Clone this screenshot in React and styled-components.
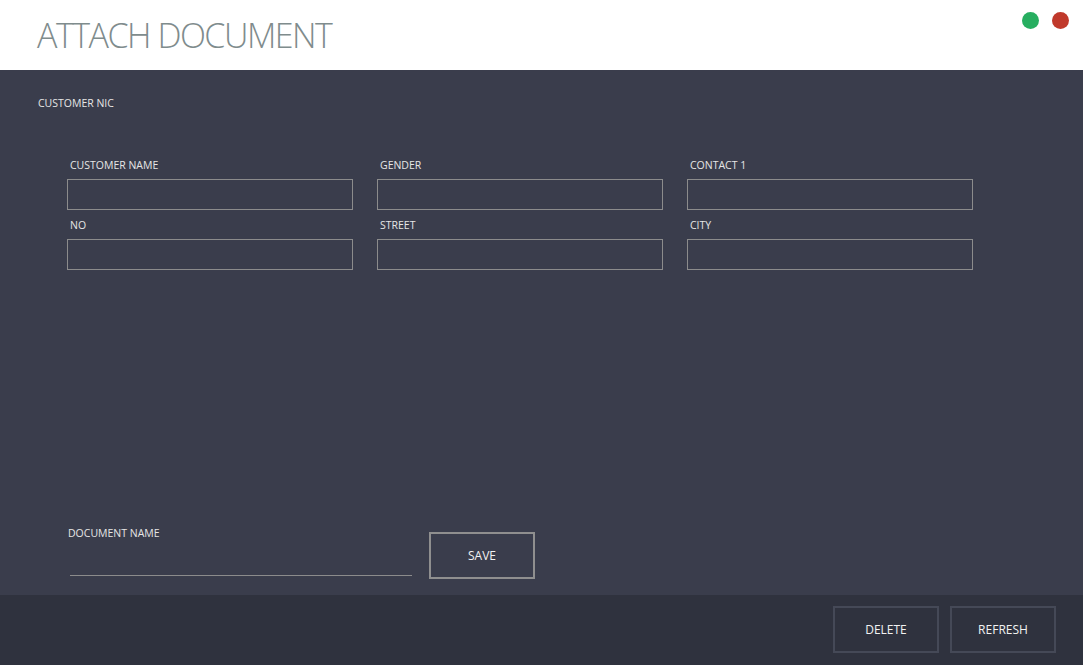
import React from "react";
import styled, { createGlobalStyle } from "styled-components";

const Global = createGlobalStyle`
  html, body { margin: 0; padding: 0; }
  body { font-family: "Open Sans", "Noto Sans", sans-serif; background: #3a3d4c; }
  * { box-sizing: border-box; }
`;

const Window = styled.div`
  width: 1083px;
  height: 665px;
  display: flex;
  flex-direction: column;
  overflow: hidden;
`;

const Header = styled.header`
  height: 70px;
  flex: 0 0 70px;
  background: #ffffff;
  display: flex;
  align-items: flex-start;
`;

const Title = styled.h1`
  margin: 0;
  padding: 15px 0 0 37px;
  font-family: "Open Sans", sans-serif;
  font-weight: 300;
  font-size: 34px;
  line-height: 40px;
  color: #7f8c8d;
  letter-spacing: -1.5px;
`;

const Dots = styled.div`
  margin-left: auto;
  display: flex;
  gap: 13px;
  padding: 12px 14px 0 0;
`;

const Dot = styled.span`
  width: 17px;
  height: 17px;
  border-radius: 50%;
  background: ${(p) => p.$color};
`;

const Main = styled.main`
  flex: 1;
  background: #3a3d4c;
  display: flex;
  flex-direction: column;
  padding: 26px 0 16px 38px;
`;

const Label = styled.div`
  font-size: 10.5px;
  font-weight: 500;
  line-height: 14px;
  color: #e6e6e6;
  white-space: nowrap;
  padding-left: ${(p) => p.$indent || 0}px;
`;

const Grid = styled.div`
  margin: 48px 0 0 29px;
  display: grid;
  grid-template-columns: repeat(3, 286px);
  column-gap: 24px;
  row-gap: 8px;
`;

const Field = styled.div`
  display: flex;
  flex-direction: column;
  gap: 7px;
`;

const BoxInput = styled.input`
  height: 31px;
  width: 100%;
  background: transparent;
  border: 1px solid #8c8c8c;
  outline: none;
  color: #fff;
  padding: 0 6px;
  font-family: inherit;
`;

const DocRow = styled.div`
  margin-top: auto;
  display: flex;
  align-items: flex-start;
  padding-left: 30px;
`;

const DocField = styled.div`
  display: flex;
  flex-direction: column;
  width: 344px;
`;

const LineInput = styled.input`
  margin-left: 2px;
  width: 342px;
  height: 36px;
  background: transparent;
  border: none;
  border-bottom: 1px solid #8c8c8c;
  outline: none;
  color: #fff;
  font-family: inherit;
`;

const Button = styled.button`
  width: 106px;
  height: 47px;
  background: transparent;
  border: 2px solid ${(p) => p.$border};
  color: #f2f2f2;
  font-family: "Open Sans", sans-serif;
  font-size: 12px;
  cursor: pointer;
  margin-top: ${(p) => p.$top || 0}px;
  margin-left: ${(p) => p.$left || 0}px;
`;

const Footer = styled.footer`
  height: 70px;
  flex: 0 0 70px;
  background: #2f323e;
  display: flex;
  justify-content: flex-end;
  align-items: flex-start;
  gap: 11px;
  padding: 11px 27px 0 0;
`;

const fields = [
  "CUSTOMER NAME",
  "GENDER",
  "CONTACT 1",
  "NO",
  "STREET",
  "CITY",
];

export default function App() {
  return (
    <>
      <Global />
      <Window>
        <Header>
          <Title>ATTACH DOCUMENT</Title>
          <Dots>
            <Dot $color="#27ae60" />
            <Dot $color="#c0392b" />
          </Dots>
        </Header>
        <Main>
          <Label>CUSTOMER NIC</Label>
          <Grid>
            {fields.map((f) => (
              <Field key={f}>
                <Label $indent={3}>{f}</Label>
                <BoxInput />
              </Field>
            ))}
          </Grid>
          <DocRow>
            <DocField>
              <Label>DOCUMENT NAME</Label>
              <LineInput />
            </DocField>
            <Button $border="#8f8f8f" $top={6} $left={17}>SAVE</Button>
          </DocRow>
        </Main>
        <Footer>
          <Button $border="#454957">DELETE</Button>
          <Button $border="#454957">REFRESH</Button>
        </Footer>
      </Window>
    </>
  );
}
